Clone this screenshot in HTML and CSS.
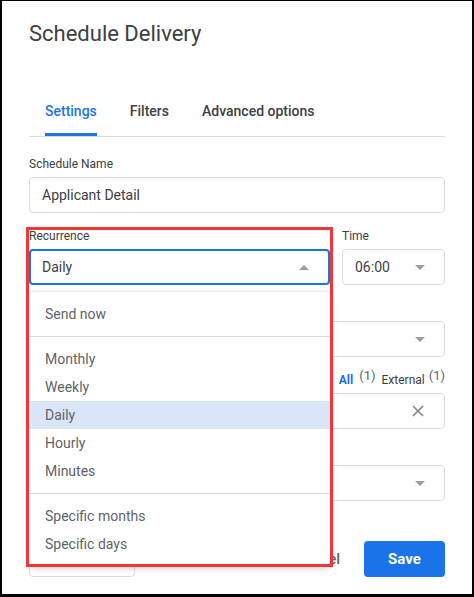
FILE: index.html
```html
<!DOCTYPE html>
<html lang="en">
<head>
<meta charset="utf-8">
<title>Schedule Delivery</title>
<link rel="stylesheet" href="styles.css">
</head>
<body>
<div class="frame">
  <h1 class="title">Schedule Delivery</h1>
  <nav class="tabs">
    <span class="tab active">Settings</span>
    <span class="tab">Filters</span>
    <span class="tab">Advanced options</span>
  </nav>

  <div class="form">
    <div class="field">
      <div class="label">Schedule Name</div>
      <div class="input">Applicant Detail</div>
    </div>

    <div class="row">
      <div class="field recurrence">
        <div class="label">Recurrence</div>
        <div class="input select focused">
          <span class="value">Daily</span>
          <span class="arrow up"></span>
        </div>
        <ul class="menu">
          <li class="item">Send now</li>
          <li class="divider"></li>
          <li class="item">Monthly</li>
          <li class="item">Weekly</li>
          <li class="item selected">Daily</li>
          <li class="item">Hourly</li>
          <li class="item">Minutes</li>
          <li class="divider"></li>
          <li class="item">Specific months</li>
          <li class="item">Specific days</li>
        </ul>
        <div class="annotation"></div>
      </div>
      <div class="field">
        <div class="label">Time</div>
        <div class="input select">
          <span class="value">06:00</span>
          <span class="arrow down"></span>
        </div>
      </div>
    </div>

    <div class="field">
      <div class="label"></div>
      <div class="input select">
        <span class="value"></span>
        <span class="arrow down"></span>
      </div>
    </div>

    <div class="field">
      <div class="label label-split">
        <span></span>
        <span class="counts">
          <span class="count-all">All</span><span class="count">(1)</span>
          <span class="count-ext">External</span><span class="count">(1)</span>
        </span>
      </div>
      <div class="input select">
        <span class="value"></span>
        <svg class="clear" width="12" height="12" viewBox="0 0 12 12" aria-hidden="true">
          <path d="M1 1 L11 11 M11 1 L1 11" stroke="#80868b" stroke-width="1.6" fill="none"/>
        </svg>
      </div>
    </div>

    <div class="field">
      <div class="label"></div>
      <div class="input select">
        <span class="value"></span>
        <span class="arrow down"></span>
      </div>
    </div>
  </div>

  <div class="footer">
    <button class="btn btn-outline" aria-label="Send test"></button>
    <div class="actions">
      <button class="btn btn-text">Cancel</button>
      <button class="btn btn-primary">Save</button>
    </div>
  </div>
</div>
</body>
</html>
```

FILE: styles.css
```css
html, body {
  margin: 0;
  padding: 0;
  background: #000;
}

body {
  font-family: Roboto, "Liberation Sans", Arial, sans-serif;
  color: #3c4043;
}

.frame {
  margin: 1px 2px 3px 2px;
  height: 593px;
  background: #fff;
  box-sizing: border-box;
  padding: 19px 27px 0 27px;
}

.title {
  margin: 0;
  font-size: 22px;
  line-height: 28px;
  font-weight: 400;
  color: #3c4043;
}

.tabs {
  margin-top: 53px;
  display: flex;
  gap: 33px;
  padding-left: 16px;
  border-bottom: 1px solid #dadce0;
}

.tab {
  font-size: 14px;
  line-height: 20px;
  font-weight: 500;
  color: #3c4043;
  padding-bottom: 12px;
  border-bottom: 3px solid transparent;
}

.tab.active {
  color: #1a73e8;
  border-bottom-color: #1a73e8;
}

.form {
  margin-top: 19px;
  display: flex;
  flex-direction: column;
  gap: 15px;
}

.row {
  display: grid;
  grid-template-columns: 1fr 103px;
  gap: 12px;
}

.field {
  display: flex;
  flex-direction: column;
}

.label {
  height: 16px;
  font-size: 12px;
  line-height: 16px;
  color: #3c4043;
  margin-bottom: 5px;
}

.label-split {
  display: flex;
  justify-content: space-between;
}

.counts {
  display: flex;
  align-items: baseline;
  font-size: 12px;
}

.count-all {
  color: #1a73e8;
  font-weight: 700;
}

.count-ext {
  color: #3c4043;
  margin-left: 6px;
}

.count {
  color: #5f6368;
  font-size: 13px;
  margin-left: 6px;
  position: relative;
  top: -4px;
}

.count-ext + .count {
  margin-left: 4px;
}

.input {
  height: 36px;
  box-sizing: border-box;
  border: 1px solid #dadce0;
  border-radius: 4px;
  padding: 0 12px;
  font-size: 14px;
  color: #3c4043;
  display: flex;
  align-items: center;
}

.select {
  justify-content: space-between;
  padding-right: 19px;
}

.select.focused {
  border: 2px solid #1a73e8;
  padding: 0 19px 0 11px;
}

.arrow {
  width: 0;
  height: 0;
  border-left: 5px solid transparent;
  border-right: 5px solid transparent;
}

.arrow.down {
  border-top: 5px solid #9aa0a6;
}

.arrow.up {
  border-bottom: 5px solid #9aa0a6;
}

.clear {
  margin-right: 1px;
}

/* dropdown menu */
.recurrence {
  position: relative;
}

.menu {
  position: absolute;
  left: 0;
  top: 64px;
  width: 302px;
  margin: 0;
  padding: 8px 0;
  list-style: none;
  background: #fff;
  border-radius: 4px;
  box-shadow: 0 2px 6px rgba(0, 0, 0, 0.22), 0 0 2px rgba(0, 0, 0, 0.12);
  z-index: 5;
}

.item {
  height: 28px;
  line-height: 28px;
  padding: 0 16px;
  font-size: 14px;
  color: #5f6368;
}

.item.selected {
  background: #d9e6f8;
}

.divider {
  height: 1px;
  background: #dadce0;
  margin: 8px 0;
}

.annotation {
  position: absolute;
  left: -3px;
  top: -1px;
  width: 307px;
  height: 340px;
  box-sizing: border-box;
  border: 3px solid #f23535;
  z-index: 6;
  pointer-events: none;
}

/* footer */
.footer {
  margin-top: 40px;
  display: flex;
  justify-content: space-between;
  align-items: center;
}

.actions {
  display: flex;
  gap: 8px;
}

.btn {
  height: 36px;
  box-sizing: border-box;
  border-radius: 4px;
  font-family: Roboto, "Liberation Sans", Arial, sans-serif;
  font-size: 15px;
  padding: 0 16px;
  cursor: pointer;
}

.btn-outline {
  width: 106px;
  background: #fff;
  border: 1px solid #dadce0;
}

.btn-text {
  background: transparent;
  border: none;
  color: #5f6368;
  font-weight: 500;
}

.btn-primary {
  width: 81px;
  background: #1a73e8;
  border: none;
  color: #fff;
  font-weight: 700;
}
```
